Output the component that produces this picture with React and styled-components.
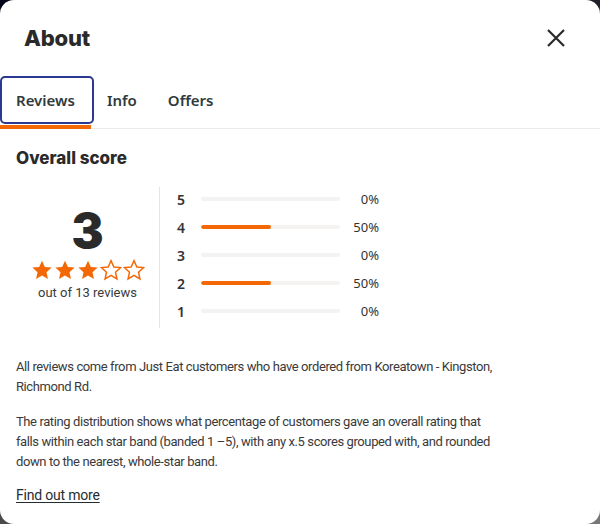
import React from "react"
import styled, { createGlobalStyle } from "styled-components"

const GlobalStyle = createGlobalStyle`
  html, body {
    margin: 0;
    padding: 0;
  }
  body {
    background: linear-gradient(160deg, #05061a 0%, #3a3a3a 60%, #777 100%);
    font-family: Roboto, "Noto Sans", sans-serif;
    color: #242e30;
  }
`

const Modal = styled.div`
  width: 600px;
  height: 524px;
  background: #fff;
  border-radius: 14px;
  overflow: hidden;
  box-sizing: border-box;
`

const Header = styled.div`
  display: flex;
  align-items: center;
  justify-content: space-between;
  height: 76px;
  padding: 0 34px 0 24px;
  box-sizing: border-box;
`

const Title = styled.h1`
  margin: 0;
  font-family: Inter, sans-serif;
  font-weight: 800;
  font-size: 22px;
  letter-spacing: -0.2px;
  color: #2a2a2a;
`

const CloseButton = styled.button`
  border: 0;
  background: none;
  padding: 0;
  display: flex;
  color: #2a2a2a;
  cursor: pointer;
`

const Tabs = styled.div`
  display: flex;
  border-bottom: 1px solid #ebebeb;
`

const Tab = styled.button`
  position: relative;
  border: 2px solid ${p => (p.$active ? "#2b3990" : "transparent")};
  border-radius: 5px;
  background: none;
  height: 48px;
  padding: ${p => (p.$first ? "0 17px 0 14px" : "0 16px 0 11px")};
  margin-bottom: 4px;
  font-family: "Noto Sans", sans-serif;
  font-weight: 600;
  font-size: 15px;
  color: #303a3c;
  cursor: pointer;
  &::after {
    content: "";
    display: ${p => (p.$active ? "block" : "none")};
    position: absolute;
    left: -2px;
    right: 1px;
    bottom: -7px;
    height: 4px;
    background: #f36805;
  }
`

const Body = styled.div`
  padding: 19px 16px 0;
`

const SectionTitle = styled.h2`
  margin: 0;
  font-family: Inter, sans-serif;
  font-weight: 800;
  font-size: 17px;
  color: #2a2a2a;
`

const ScoreArea = styled.div`
  display: flex;
  margin-top: 19px;
  height: 141px;
`

const Summary = styled.div`
  width: 144px;
  border-right: 1px solid #e4e4e4;
  display: flex;
  flex-direction: column;
  align-items: center;
  padding-top: 18px;
  box-sizing: border-box;
`

const BigScore = styled.div`
  font-family: Inter, sans-serif;
  font-weight: 900;
  font-size: 48px;
  line-height: 52px;
  color: #2a2a2a;
`

const Stars = styled.div`
  display: flex;
  gap: 1px;
  margin-top: 2px;
`

const OutOf = styled.div`
  margin-top: 4px;
  font-size: 13px;
  color: #3a3a3a;
`

const Distribution = styled.div`
  display: flex;
  flex-direction: column;
  margin-top: -2px;
  padding-left: 17px;
`

const BarRow = styled.div`
  display: grid;
  grid-template-columns: 24px 139px 39px;
  align-items: center;
  height: 28px;
`

const BarLabel = styled.span`
  font-family: "Noto Sans", sans-serif;
  font-weight: 600;
  font-size: 14px;
  color: #333;
`

const Track = styled.div`
  height: 4px;
  border-radius: 2px;
  background: #f5f3f1;
  overflow: hidden;
`

const Fill = styled.div`
  height: 100%;
  border-radius: 2px;
  background: #f36805;
`

const Percent = styled.span`
  text-align: right;
  font-family: "Noto Sans", sans-serif;
  font-size: 13px;
  color: #333;
`

const TextBlock = styled.div`
  margin-top: 29px;
  max-width: 482px;
`

const Paragraph = styled.p`
  margin: 0;
  font-size: 13px;
  line-height: 20px;
  letter-spacing: -0.4px;
  color: #3a3a3a;
  & + & {
    margin-top: 15px;
  }
`

const MoreLink = styled.a`
  display: inline-block;
  margin-top: 15px;
  font-size: 14px;
  letter-spacing: -0.2px;
  color: #242e30;
  text-decoration: underline;
  text-underline-offset: 2px;
`

const Star = ({ filled }) => (
  <svg width="22" height="22" viewBox="0 0 24 24">
    <path
      d="M12 1.8l3.1 6.9 7.4.7-5.6 5 1.6 7.4L12 17.9l-6.5 3.9 1.6-7.4-5.6-5 7.4-.7z"
      fill={filled ? "#f36805" : "none"}
      stroke="#f36805"
      strokeWidth={filled ? 0 : 1.6}
      strokeLinejoin="miter"
    />
  </svg>
)

const bands = [
  { star: 5, pct: 0 },
  { star: 4, pct: 50 },
  { star: 3, pct: 0 },
  { star: 2, pct: 50 },
  { star: 1, pct: 0 },
]

export default function App() {
  return (
    <>
      <GlobalStyle />
      <Modal>
        <Header>
          <Title>About</Title>
          <CloseButton aria-label="Close">
            <svg width="20" height="20" viewBox="0 0 20 20">
              <path d="M2 2L18 18M18 2L2 18" stroke="currentColor" strokeWidth="2.2" />
            </svg>
          </CloseButton>
        </Header>
        <Tabs>
          <Tab $active $first>Reviews</Tab>
          <Tab>Info</Tab>
          <Tab>Offers</Tab>
        </Tabs>
        <Body>
          <SectionTitle>Overall score</SectionTitle>
          <ScoreArea>
            <Summary>
              <BigScore>3</BigScore>
              <Stars>
                {[1, 2, 3, 4, 5].map(i => (
                  <Star key={i} filled={i <= 3} />
                ))}
              </Stars>
              <OutOf>out of 13 reviews</OutOf>
            </Summary>
            <Distribution>
              {bands.map(b => (
                <BarRow key={b.star}>
                  <BarLabel>{b.star}</BarLabel>
                  <Track>
                    <Fill style={{ width: `${b.pct}%` }} />
                  </Track>
                  <Percent>{b.pct}%</Percent>
                </BarRow>
              ))}
            </Distribution>
          </ScoreArea>
          <TextBlock>
            <Paragraph>
              All reviews come from Just Eat customers who have ordered from Koreatown - Kingston,
              Richmond Rd.
            </Paragraph>
            <Paragraph>
              The rating distribution shows what percentage of customers gave an overall rating that
              falls within each star band (banded 1 –5), with any x.5 scores grouped with, and rounded
              down to the nearest, whole-star band.
            </Paragraph>
          </TextBlock>
          <MoreLink href="#">Find out more</MoreLink>
        </Body>
      </Modal>
    </>
  )
}
